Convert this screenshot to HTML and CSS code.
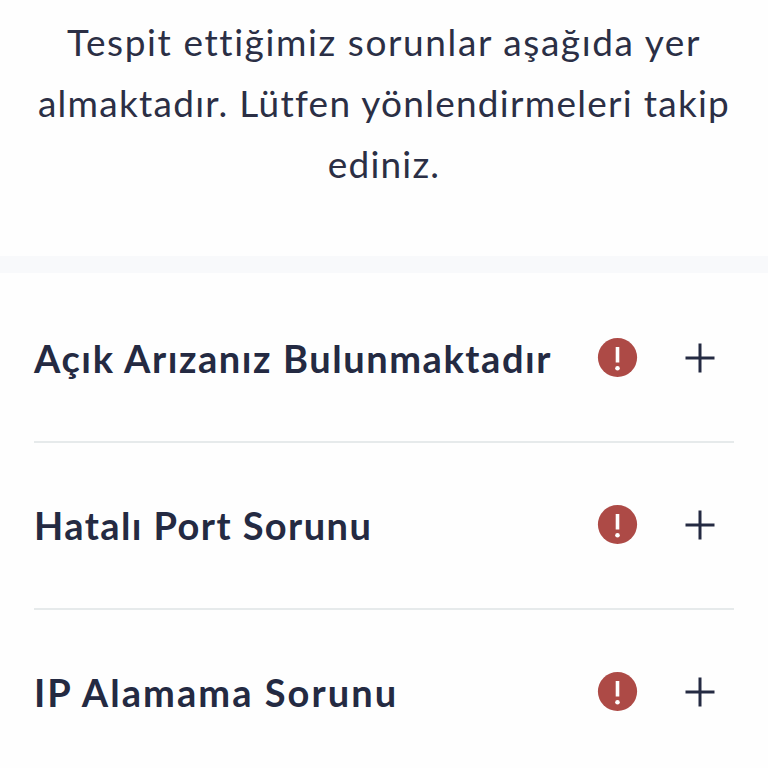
FILE: index.html
```html
<!DOCTYPE html>
<html lang="tr">
<head>
    <meta charset="UTF-8">
    <meta name="viewport" content="width=device-width, initial-scale=1.0">
    <title>Sorun Tespiti</title>
    <link rel="stylesheet" href="styles.css">
</head>
<body>
    <p class="intro">
        <span class="line line-1">Tespit ettiğimiz sorunlar aşağıda yer</span>
        <span class="line line-2">almaktadır. Lütfen yönlendirmeleri takip</span>
        <span class="line line-3">ediniz.</span>
    </p>
    <div class="divider"></div>
    <div class="issues">
        <div class="issue">
            <h3 class="title title-1">Açık Arızanız Bulunmaktadır</h3>
            <svg class="alert" viewBox="0 0 40 40"><circle cx="19.5" cy="19.5" r="19.6" fill="#ad4a46"/><path d="M19.5 9v15.5" stroke="#fff" stroke-width="3.6"/><circle cx="19.5" cy="30.3" r="2.3" fill="#fff"/></svg>
            <svg class="plus" viewBox="0 0 30 30"><path d="M15 .5v29M.5 15h29" stroke="#242a42" stroke-width="3"/></svg>
        </div>
        <div class="issue">
            <h3 class="title title-2">Hatalı Port Sorunu</h3>
            <svg class="alert" viewBox="0 0 40 40"><circle cx="19.5" cy="19.5" r="19.6" fill="#ad4a46"/><path d="M19.5 9v15.5" stroke="#fff" stroke-width="3.6"/><circle cx="19.5" cy="30.3" r="2.3" fill="#fff"/></svg>
            <svg class="plus" viewBox="0 0 30 30"><path d="M15 .5v29M.5 15h29" stroke="#242a42" stroke-width="3"/></svg>
        </div>
        <div class="issue">
            <h3 class="title title-3">IP Alamama Sorunu</h3>
            <svg class="alert" viewBox="0 0 40 40"><circle cx="19.5" cy="19.5" r="19.6" fill="#ad4a46"/><path d="M19.5 9v15.5" stroke="#fff" stroke-width="3.6"/><circle cx="19.5" cy="30.3" r="2.3" fill="#fff"/></svg>
            <svg class="plus" viewBox="0 0 30 30"><path d="M15 .5v29M.5 15h29" stroke="#242a42" stroke-width="3"/></svg>
        </div>
    </div>
</body>
</html>
```
FILE: styles.css
```css
body {
    margin: 0;
    height: 768px;
    overflow: hidden;
    background-color: #fefefe;
    color: #242a42;
    font-family: Lato, sans-serif;
    font-variant-ligatures: none;
}
.intro {
    box-sizing: border-box;
    margin: 0;
    padding-top: 11px;
    height: 256px;
    text-align: center;
    font-size: 37px;
    line-height: 61px;
    color: #2b2f45;
}
.line {
    display: block;
    white-space: nowrap;
}
.line-1 {
    letter-spacing: 1.6px;
}
.line-2 {
    letter-spacing: 1.27px;
}
.line-3 {
    letter-spacing: 1.2px;
}
.divider {
    height: 17px;
    background-color: #f8f9fb;
}
.issues {
    padding: 2px 34px 0;
}
.issue {
    display: flex;
    align-items: center;
    box-sizing: border-box;
    height: 167.5px;
    border-bottom: 2px solid #e6eaeb;
}
.issue:last-child {
    height: 164.5px;
    border-bottom: none;
}
.title {
    flex: 1;
    margin: 0;
    font-size: 38px;
    line-height: 50px;
    white-space: nowrap;
}
.title-1 {
    letter-spacing: 1.57px;
}
.title-2 {
    letter-spacing: 1.42px;
}
.title-3 {
    letter-spacing: 2.05px;
}
.alert {
    width: 40px;
    height: 40px;
    margin-right: 47px;
    overflow: visible;
}
.plus {
    width: 30px;
    height: 30px;
    margin-right: 19px;
}
```
